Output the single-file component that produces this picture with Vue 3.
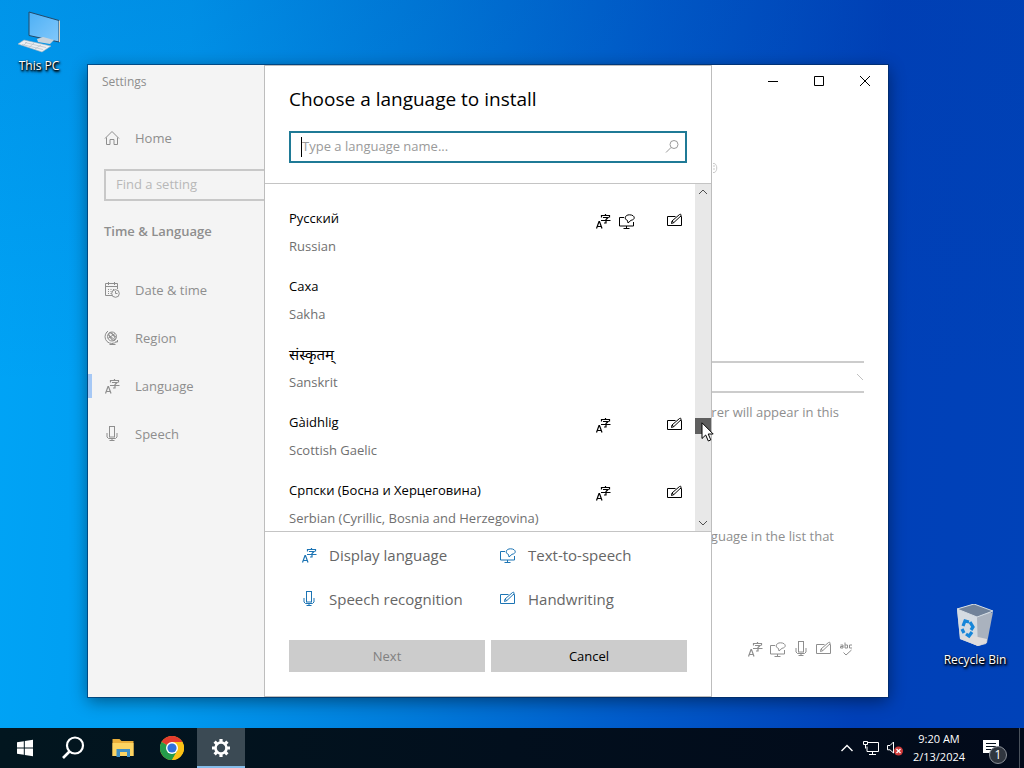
<script setup>
import { ref } from 'vue';

const query = ref('');
const setting = ref('');

const navItems = [
    { id: 'date', label: 'Date & time' },
    { id: 'region', label: 'Region' },
    { id: 'lang', label: 'Language', active: true },
    { id: 'mic', label: 'Speech' }
];

const featureOrder = ['lang', 'tts', 'mic', 'pen'];

const languages = [
    { native: 'Русский', name: 'Russian', features: ['lang', 'tts', 'pen'] },
    { native: 'Саха', name: 'Sakha', features: [] },
    { native: 'संस्कृतम्', name: 'Sanskrit', features: [], script: 'devanagari' },
    { native: 'Gàidhlig', name: 'Scottish Gaelic', features: ['lang', 'pen'] },
    { native: 'Српски (Босна и Херцеговина)', name: 'Serbian (Cyrillic, Bosnia and Herzegovina)', features: ['lang', 'pen'] }
];

const legend = [
    { id: 'lang', label: 'Display language' },
    { id: 'tts', label: 'Text-to-speech' },
    { id: 'mic', label: 'Speech recognition' },
    { id: 'pen', label: 'Handwriting' }
];
</script>

<template>
    <div class="desktop">
        <!-- Icon sprite -->
        <svg class="sprite" aria-hidden="true">
            <symbol id="i-home" viewBox="0 0 16 16">
                <path d="M1 8.500 8 1.500l7 7M2.500 7.500v7h3.500v-5h4v5h3.500v-7" />
            </symbol>
            <symbol id="i-date" viewBox="0 0 16 16">
                <path d="M8 13.500H1.500v-12h12V7M1.500 4.500h12M4.500 0v3M10.500 0v3" />
                <path d="M4 7.500h1M6.500 7.500h1M9 7.500h1M4 9.500h1M6.500 9.500h1M4 11.500h1M6.500 11.500h1" />
                <circle cx="11.500" cy="11.500" r="3.800" />
                <path d="M11.500 9v2.500h2" />
            </symbol>
            <symbol id="i-region" viewBox="0 0 16 16">
                <circle cx="8" cy="6.500" r="4.500" />
                <ellipse cx="8" cy="6.500" rx="2" ry="4.500" transform="rotate(-35 8 6.500)" />
                <path d="M4 4.500 11 10M6 2.500l6 4.500M4 8.500l7-5M3 2a6.500 6.500 0 0 0 9.500 9.500M2 3l2-2M13.500 10v2h-2M8.500 13v1.500M5.500 14.500h6" />
            </symbol>
            <symbol id="i-lang" viewBox="0 0 16 16">
                <path d="M1.500 15.500 4 8.500h.5l2.500 7M2.500 13.500h4" stroke-width="1.200" />
                <path d="M10.500 1v1.500M6.500 4.500v-2h8v2M8 4.500h5L11 6.500v3.500H9M6 7.500h9.500" stroke-width="1.200" />
            </symbol>
            <symbol id="i-tts" viewBox="0 0 16 16">
                <path d="M5 4.500H.5v8.500h14V9M7.500 13v2M4.500 15.500h6" />
                <path d="M8.500 7.500C4.500 6 6 1.800 10.500 1.800c5.500 0 6.500 4.800 1.500 5.500L9 10z" />
            </symbol>
            <symbol id="i-mic" viewBox="0 0 16 16">
                <rect x="5.500" y=".5" width="5" height="10.500" />
                <path d="M3 7v4l1.500 1.500h7L13 11V7M8 12.500v2M5.500 14.500h5" />
            </symbol>
            <symbol id="i-pen" viewBox="0 0 16 16">
                <path d="M8.500 3.500H.5v9h14V3.500h-1.500" />
                <path d="M4.500 10.500 5 8l7.500-6.500c1-.8 2.300.3 1.400 1.400L6.800 9.600zM5 8l1.800 1.600" />
            </symbol>
            <symbol id="i-abc" viewBox="0 0 16 16">
                <path d="M1.500 4H4v3H1.500V5.500H4M6 1.500V7h2.500V4H6M13 4h-2.500v3H13M4.500 11.500 7 14l5.500-5" />
            </symbol>
            <symbol id="i-search" viewBox="0 0 16 16">
                <circle cx="9" cy="5.500" r="4" />
                <path d="M6 8.500 1 13.500" />
            </symbol>
            <symbol id="i-up" viewBox="0 0 16 16"><path d="M4 10l4-4 4 4" /></symbol>
            <symbol id="i-down" viewBox="0 0 16 16"><path d="M4 6l4 4 4-4" /></symbol>
        </svg>

        <main class="workspace">
            <a class="shortcut this-pc" href="#">
                <svg class="shortcut-icon" viewBox="0 2 48 48">
                    <defs>
                        <linearGradient id="screen" x1="0" y1="0" x2="1" y2="1">
                            <stop offset="0" stop-color="#4db0f5" />
                            <stop offset="1" stop-color="#82c8fb" />
                        </linearGradient>
                    </defs>
                    <path d="M14 4 44 12.500V34L14 27.500z" fill="url(#screen)" stroke="#234a6a" />
                    <path d="M44.500 12.500V34" stroke="#d6d0bd" />
                    <path d="M22 31l6-2 11 3-4 4-12-2z" fill="#c8d3dc" />
                    <path d="M3 36l6-4 27 6-9 6z" fill="#eceff2" stroke="#a5b4bf" stroke-width=".6" />
                    <path d="M7 36.500l21 5M10 34.500l21 5M12 34l-4 4M19 35l-5 4.500M26 37l-6 4" stroke="#b3bfc8" stroke-width=".7" />
                </svg>
                <span>This PC</span>
            </a>

            <a class="shortcut recycle-bin" href="#">
                <svg class="shortcut-icon" viewBox="0 4 48 48">
                    <path d="M6 9l17-5 17 7-5 33-8 2-18-7z" fill="#c4cad2" />
                    <path d="M6 9l20 8 1 29-18-7z" fill="#d4dbe2" />
                    <path d="M26 17l16-5-6 31-9 3z" fill="#aab2be" />
                    <path d="M6 9l17-5 19 7-16 6z" fill="#72839a" stroke="#d5dde4" />
                    <path d="M9 38l9-3 18 4-.5 4-8.500 3z" fill="#dfdcdc" />
                    <path d="M12 26l2-5 4 1M19 22l3 5-2 3M21 32l-3 4-3-2M13 33l-2-4" fill="none" stroke="#1686d9" stroke-width="3.200" />
                </svg>
                <span>Recycle Bin</span>
            </a>

            <section class="window">
                <header class="titlebar">
                    <span class="window-name">Settings</span>
                    <div class="window-controls">
                        <button aria-label="Minimize"><svg viewBox="0 0 12 12"><path d="M1 6.500h10" /></svg></button>
                        <button aria-label="Maximize"><svg viewBox="0 0 12 12"><path d="M1.500 1.500h9v9h-9z" /></svg></button>
                        <button aria-label="Close"><svg viewBox="0 0 12 12"><path d="M1 1l10 10M11 1 1 11" /></svg></button>
                    </div>
                </header>

                <div class="window-body">
                    <aside class="sidebar">
                        <a class="nav-item home" href="#">
                            <svg class="icon"><use href="#i-home" /></svg>
                            <span>Home</span>
                        </a>
                        <input v-model="setting" class="find" type="text" placeholder="Find a setting" aria-label="Find a setting" />
                        <h2>Time &amp; Language</h2>
                        <nav>
                            <a
                                v-for="item in navItems"
                                :key="item.id"
                                class="nav-item"
                                :class="{ active: item.active }"
                                href="#"
                            >
                                <svg class="icon"><use :href="`#i-${item.id}`" /></svg>
                                <span>{{ item.label }}</span>
                            </a>
                        </nav>
                    </aside>

                    <div class="content">
                        <svg class="cut-mark" viewBox="0 0 6 12"><path d="M1 1.500c5-1 5 10 0 9M1 4h2M1 7h2" /></svg>
                        <button class="display-select" aria-label="Windows display language">
                            <svg viewBox="0 0 8 8"><path d="M1 1l6 6" /></svg>
                        </button>
                        <p class="note">Windows features like Settings and File Explorer will appear in this</p>
                        <p class="note second">Apps and websites will appear in the first language in the list that</p>
                        <div class="installed">
                            <svg v-for="id in [...featureOrder, 'abc']" :key="id" class="icon"><use :href="`#i-${id}`" /></svg>
                        </div>
                    </div>
                </div>

                <!-- Language picker -->
                <div class="overlay">
                    <div class="dialog" role="dialog" aria-labelledby="dialog-title">
                        <div class="dialog-head">
                            <h1 id="dialog-title">Choose a language to install</h1>
                            <div class="search-box">
                                <span class="caret"></span>
                                <input v-model="query" type="text" placeholder="Type a language name..." aria-label="Type a language name" />
                                <svg class="icon"><use href="#i-search" /></svg>
                            </div>
                        </div>

                        <div class="list-area">
                            <ul class="languages">
                                <li v-for="lang in languages" :key="lang.name">
                                    <div class="lang-text">
                                        <span class="native" :class="lang.script">{{ lang.native }}</span>
                                        <span class="english">{{ lang.name }}</span>
                                    </div>
                                    <div class="features">
                                        <span v-for="id in featureOrder" :key="id">
                                            <svg v-if="lang.features.includes(id)" class="icon"><use :href="`#i-${id}`" /></svg>
                                        </span>
                                    </div>
                                </li>
                            </ul>
                            <div class="scrollbar">
                                <svg class="icon"><use href="#i-up" /></svg>
                                <div class="track before"></div>
                                <div class="thumb"></div>
                                <div class="track after"></div>
                                <svg class="icon"><use href="#i-down" /></svg>
                            </div>
                        </div>

                        <div class="dialog-foot">
                            <ul class="legend">
                                <li v-for="item in legend" :key="item.id">
                                    <svg class="icon"><use :href="`#i-${item.id}`" /></svg>
                                    <span>{{ item.label }}</span>
                                </li>
                            </ul>
                            <div class="actions">
                                <button disabled>Next</button>
                                <button>Cancel</button>
                            </div>
                        </div>
                    </div>
                </div>
            </section>

            <svg class="pointer" viewBox="0 0 12 20">
                <path d="M.5.800v15.700l3.700-3.500 2.600 6 2.500-1.100-2.600-5.900h5z" fill="#fff" stroke="#000" />
            </svg>
        </main>

        <footer class="taskbar">
            <div class="apps">
                <button aria-label="Start">
                    <svg viewBox="0 0 24 24" class="solid"><path d="M4 6.200l6.800-1V11.500H4zM11.800 5l8.200-1.200v7.700h-8.200zM4 12.500h6.800v6.300L4 17.800zM11.800 12.500H20v7.700L11.800 19z" /></svg>
                </button>
                <button aria-label="Search">
                    <svg viewBox="0 0 24 24"><circle cx="13" cy="9.500" r="8" stroke-width="2.200" /><path d="M7.500 15.500 1 22" stroke-width="2.600" /></svg>
                </button>
                <button aria-label="File Explorer">
                    <svg viewBox="0 0 24 24" class="plain">
                        <path d="M1.500 3h7l2 2h12v15h-21z" fill="#e9ae3a" />
                        <path d="M1.500 7h21v13h-21z" fill="#fcd462" />
                        <path d="M5.500 13h13.500v8h-3v-5H9v5H5.500z" fill="#3f8fc4" />
                    </svg>
                </button>
                <button aria-label="Chrome">
                    <svg viewBox="0 0 24 24" class="plain">
                        <circle cx="12" cy="12" r="12" fill="#fbc116" />
                        <path d="M12 12 1.600 6A12 12 0 0 1 22.400 6z" fill="#e33b2e" />
                        <path d="M1.600 6A12 12 0 0 0 12 24l5.200-9L12 12z" fill="#259b4b" />
                        <path d="M12 6h10.400A12 12 0 0 1 12 24l5.200-9z" fill="#fbc116" />
                        <circle cx="12" cy="12" r="6" fill="#fff" />
                        <circle cx="12" cy="12" r="4.600" fill="#2f70dc" />
                    </svg>
                </button>
                <button class="running" aria-label="Settings">
                    <svg viewBox="0 0 24 24">
                        <circle cx="12" cy="12" r="5.500" stroke-width="2.600" />
                        <path d="M12 3v3M12 18v3M3 12h3M18 12h3M5.600 5.600l2.200 2.200M16.200 16.200l2.200 2.200M18.400 5.600l-2.200 2.200M7.800 16.200l-2.200 2.200" stroke-width="3.200" />
                    </svg>
                </button>
            </div>

            <div class="tray">
                <button aria-label="Show hidden icons"><svg viewBox="0 0 16 16"><path d="M2.500 11 8 5.500l5.500 5.500" stroke-width="1.400" /></svg></button>
                <button aria-label="Network">
                    <svg viewBox="0 0 16 16"><path d="M5 2.500h10.500v9H4V6.500M9.500 11.500v3M6 14.500h7M.5 1.500h4v3h-4zM2.500 4.500v4" /></svg>
                </button>
                <button aria-label="Volume muted">
                    <svg viewBox="0 0 16 16">
                        <path d="M.5 5.500h2.500l3.500-3.500v11L3 9.800H.5z" />
                        <circle cx="11.500" cy="11" r="4.500" class="mute" />
                        <path d="M9.500 9l4 4M13.500 9l-4 4" stroke-width="1.300" />
                    </svg>
                </button>
                <button class="clock">
                    <span>9:20 AM</span>
                    <span>2/13/2024</span>
                </button>
                <button class="notify" aria-label="Notifications">
                    <svg viewBox="0 0 16 16" class="plain">
                        <path d="M0 0h16v13H9.500L6.500 16v-3H0z" fill="#fff" />
                        <path d="M3 3.500h10M3 6.500h10M3 9.500h7" stroke="#04101c" />
                    </svg>
                    <span class="badge">1</span>
                </button>
                <span class="show-desktop"></span>
            </div>
        </footer>
    </div>
</template>

<style>
body {
    overflow: hidden;
}
</style>

<style scoped>
.desktop {
    display: flex;
    flex-direction: column;
    height: 100vh;
    font-family: "Open Sans", "Noto Sans", sans-serif;
    font-size: 13px;
    background:
        linear-gradient(180deg, rgba(0, 60, 160, 0.15), rgba(0, 60, 160, 0) 50%),
        linear-gradient(93deg, #00a4f6 0%, #009cf0 18%, #007edc 40%, #005ccb 62%, #0040b8 84%, #0042b8 100%);
}

.desktop * {
    box-sizing: border-box;
}

button,
input {
    font: inherit;
    border: none;
    border-radius: 0;
    background: none;
    padding: 0;
    outline: none;
}

a {
    color: inherit;
    text-decoration: none;
}

h1,
h2,
p,
ul {
    margin: 0;
    padding: 0;
    font-weight: 400;
    list-style: none;
}

.sprite {
    position: absolute;
    width: 0;
    height: 0;
}

.icon {
    display: block;
    flex: none;
    width: 16px;
    height: 16px;
    fill: none;
    stroke: currentColor;
}

.workspace {
    position: relative;
    flex: 1;
    min-height: 0;
}

/* Desktop shortcuts */
.shortcut {
    position: absolute;
    display: flex;
    flex-direction: column;
    align-items: center;
    width: 76px;
    color: white;
    font-size: 12px;
    line-height: 16px;
    white-space: nowrap;
    text-shadow: 0 1px 2px black, 1px 1px 2px black, 1px 2px 3px black;
}

.shortcut-icon {
    width: 48px;
    height: 48px;
    fill: none;
}

.this-pc {
    top: 10px;
    left: 1px;
}

.recycle-bin {
    right: 11px;
    bottom: 60px;
}

/* Settings window */
.window {
    position: absolute;
    inset: 65px 136px 31px 88px;
    display: flex;
    flex-direction: column;
    overflow: hidden;
    background: linear-gradient(90deg, #f4f4f4 320px, white 320px);
    color: #8e8e8e;
    box-shadow: 0 0 0 1px rgba(0, 40, 90, 0.6), 0 4px 16px rgba(0, 0, 0, 0.45);
}

.titlebar {
    display: flex;
    justify-content: space-between;
    height: 32px;
}

.window-name {
    padding-left: 14px;
    font-size: 12px;
    line-height: 34px;
}

.window-controls {
    position: relative;
    z-index: 2;
    display: flex;
}

.window-controls button {
    display: grid;
    place-items: center;
    width: 46px;
}

.window-controls svg {
    width: 12px;
    height: 12px;
    fill: none;
    stroke: black;
}

.window-body {
    display: flex;
    flex: 1;
    min-height: 0;
}

.sidebar {
    flex: none;
    width: 320px;
    padding-top: 17px;
}

.nav-item {
    display: flex;
    align-items: center;
    gap: 15px;
    height: 48px;
    padding-left: 16px;
}

.nav-item.active {
    background: linear-gradient(#a6c8f5, #a6c8f5) left center / 4px 24px no-repeat;
}

.find {
    display: block;
    width: 288px;
    height: 32px;
    margin: 7px 16px 0;
    padding: 0 10px 2px;
    border: 2px solid #c8c8c8;
}

.find::placeholder {
    color: #b8b8b8;
}

.sidebar h2 {
    padding: 0 16px 5px;
    font-size: 13px;
    font-weight: 600;
    line-height: 60px;
}

.content {
    display: flex;
    flex: 1;
    flex-direction: column;
    align-items: flex-end;
    min-width: 0;
    padding: 64px 24px 40px;
}

.cut-mark {
    width: 6px;
    height: 14px;
    margin-right: 146px;
    fill: none;
    stroke: #c8c8c8;
}

.display-select {
    display: flex;
    align-items: center;
    justify-content: flex-end;
    width: 100%;
    height: 32px;
    margin-top: 186px;
    border: 2px solid #cccccc;
    border-width: 2px 0;
}

.display-select svg {
    width: 8px;
    height: 8px;
    fill: none;
    stroke: #c0c0c0;
}

.note {
    margin: 9px 25px 0 0;
    line-height: 20px;
    white-space: nowrap;
}

.note.second {
    margin: 104px 30px 0 0;
}

.installed {
    display: flex;
    gap: 7px;
    margin: auto 9px 0 0;
}

/* Language dialog */
.overlay {
    position: absolute;
    inset: 0;
    display: flex;
    justify-content: center;
}

.dialog {
    display: flex;
    flex-direction: column;
    width: 448px;
    background: white;
    border: 1px solid #bdbdbd;
    color: black;
}

.dialog-head {
    padding: 18px 24px 20px;
    border-bottom: 1px solid #c4c4c4;
}

.dialog-head h1 {
    font-size: 19px;
    line-height: 30px;
}

.search-box {
    display: flex;
    align-items: center;
    height: 32px;
    margin-top: 17px;
    padding: 0 4px 0 10px;
    border: 2px solid #1f7a96;
    color: #9a9a9a;
}

.search-box input {
    flex: 1;
    min-width: 0;
    padding-bottom: 2px;
    color: black;
}

.search-box input::placeholder {
    color: #9a9a9a;
}

.caret {
    width: 1px;
    height: 20px;
    background: black;
}

.list-area {
    display: flex;
    flex: 1;
    min-height: 0;
    overflow: hidden;
}

.languages {
    flex: 1;
    padding: 8px 8px 0 24px;
}

.languages li {
    display: flex;
    justify-content: space-between;
    padding-top: 12px;
}

.lang-text {
    display: flex;
    flex-direction: column;
    line-height: 28px;
    white-space: nowrap;
}

.native {
    height: 28px;
}

.native.devanagari {
    font-size: 15px;
}

.english {
    color: #707070;
}

.features {
    display: grid;
    grid-template-columns: repeat(4, 24px);
    height: 34px;
}

.features span {
    display: grid;
    place-items: center;
}

.scrollbar {
    display: flex;
    flex-direction: column;
    width: 16px;
    background: #e8e8e8;
    color: #505050;
}

.track.before {
    flex: 218;
}

.thumb {
    height: 16px;
    background: #5f5f5f;
}

.track.after {
    flex: 81;
}

.dialog-foot {
    padding: 1px 24px 24px;
    border-top: 1px solid #c4c4c4;
}

.legend {
    display: grid;
    grid-template-columns: 1fr 1fr;
    color: #666666;
    font-size: 15px;
}

.legend li {
    display: flex;
    align-items: center;
    gap: 12px;
    height: 44px;
    padding-left: 12px;
    white-space: nowrap;
}

.legend .icon {
    color: #1c74b4;
}

.actions {
    display: grid;
    grid-template-columns: 1fr 1fr;
    gap: 6px;
    margin-top: 19px;
}

.actions button {
    height: 32px;
    background: #cccccc;
    color: black;
}

.actions button:disabled {
    color: #808080;
}

.pointer {
    position: absolute;
    top: 422px;
    left: 701px;
    width: 13px;
    height: 20px;
}

/* Taskbar */
.taskbar {
    display: flex;
    justify-content: space-between;
    height: 40px;
    background: linear-gradient(90deg, #02161f, #020f1d 50%, #020a1a);
    color: white;
}

.apps {
    display: flex;
    gap: 1px;
}

.apps button {
    display: grid;
    place-items: center;
    width: 48px;
    border-bottom: 2px solid transparent;
    border-top: 2px solid transparent;
}

.apps button:first-child {
    width: 49px;
}

.apps .running {
    background: #3b4a54;
    border-top-color: #3b4a54;
    border-bottom-color: #85bdea;
}

.apps svg {
    width: 24px;
    height: 24px;
    fill: none;
    stroke: white;
}

.apps svg.solid {
    fill: white;
    stroke: none;
}

.apps svg.plain {
    stroke: none;
}

.tray {
    display: flex;
    align-items: center;
}

.tray button {
    display: grid;
    place-items: center;
    width: 24px;
    height: 100%;
    color: white;
}

.tray svg {
    width: 16px;
    height: 16px;
    fill: none;
    stroke: white;
}

.tray svg.plain {
    stroke: none;
}

.tray .mute {
    fill: #cf3a3a;
    stroke: none;
}

.tray .clock {
    display: flex;
    flex-direction: column;
    justify-content: center;
    align-items: center;
    width: 64px;
    font-size: 11px;
    line-height: 18px;
    white-space: nowrap;
}

.tray .notify {
    position: relative;
    width: 40px;
}

.badge {
    position: absolute;
    right: 4px;
    bottom: 4px;
    width: 18px;
    height: 18px;
    border: 1px solid #8b9098;
    border-radius: 50%;
    background: #30363f;
    font-size: 12px;
    line-height: 16px;
    text-align: center;
}

.show-desktop {
    width: 5px;
    height: 100%;
    margin-left: 8px;
    border-left: 1px solid #4a525c;
}
</style>
